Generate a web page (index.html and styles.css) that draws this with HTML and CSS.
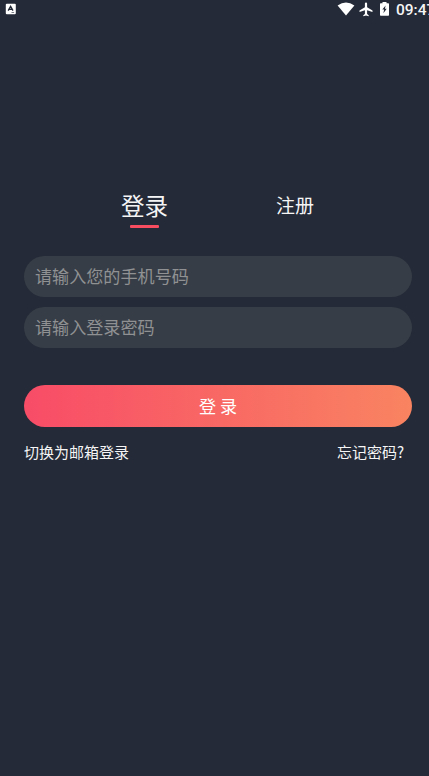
FILE: index.html
```html
<!DOCTYPE html>
<html lang="zh-CN">
<head>
<meta charset="utf-8">
<title>登录</title>
<link rel="stylesheet" href="styles.css">
</head>
<body>
<header class="status">
  <svg class="notice" width="11" height="12" viewBox="0 0 11 12"><rect x=".8" y=".7" width="10" height="10.6" rx="1" fill="#fff"/><path d="M3.2 7.6 5.6 3.4 8 7.6M4.2 6.4H7" fill="none" stroke="#242a37" stroke-width="1.4"/><path d="M6.5 9.5h2.6" stroke="#242a37" stroke-width=".6"/></svg>
  <div class="indicators">
    <svg width="18" height="14" viewBox="0 0 18 14"><path d="M.6 3.6Q9-2.6 17.4 3.6L9 13.4Z" fill="#fff"/></svg>
    <svg class="plane" width="14" height="15" viewBox="0 0 14 15"><path d="M13.5 10V8.6L8.1 5.2V1.5a1.1 1.1 0 0 0-2.2 0v3.7L.5 8.6V10l5.4-1.7v3.8l-1.6 1.1v1.1L7 13.5l2.7.8v-1.1l-1.6-1.1V8.3Z" fill="#fff"/></svg>
    <svg class="battery" width="9" height="14" viewBox="0 0 9 14"><path d="M2.5 0h4v1.2h1.8q.7 0 .7.7v11.2q0 .7-.7.7H.7q-.7 0-.7-.7V1.9q0-.7.7-.7h1.8Z" fill="#fff"/><path d="M5.6 3.5 2.3 7.6h1.8l-.7 3.6 3.3-4.4H4.9Z" fill="#242a37"/></svg>
    <span class="clock">09:47</span>
  </div>
</header>
<main>
  <nav class="tabs">
    <a class="tab active">登录</a>
    <a class="tab">注册</a>
  </nav>
  <form>
    <input class="field" type="tel" placeholder="请输入您的手机号码">
    <input class="field" type="password" placeholder="请输入登录密码">
    <button class="submit" type="button">登 录</button>
  </form>
  <div class="links"><a>切换为邮箱登录</a><a>忘记密码?</a></div>
</main>
</body>
</html>
```
FILE: styles.css
```css
* { box-sizing: border-box; }
body {
  margin: 0;
  height: 776px;
  overflow: hidden;
  background: #242a37;
  color: #f5f5f6;
  font-family: "Noto Sans CJK SC", sans-serif;
}
svg { display: block; flex: none; }
.status {
  height: 20px;
  display: flex;
  justify-content: space-between;
  padding: 2px 0 0 5px;
  overflow: hidden;
}
.notice { margin-top: 1px; }
.indicators { display: flex; width: 92px; flex: none; }
.plane { margin-left: 4px; }
.battery { margin-left: 7px; }
.clock {
  margin-left: 7px;
  font: 500 15.5px/16px Roboto, sans-serif;
}
main { padding: 165px 17px 0 24px; }
.tabs {
  display: flex;
  height: 43px;
  padding-left: 97px;
}
.tab { font-size: 19px; line-height: 39px; white-space: nowrap; }
.tab.active {
  width: 47px;
  margin-right: 108px;
  font-size: 23.5px;
  line-height: 41px;
}
.tab.active::after {
  content: "";
  display: block;
  width: 29px;
  height: 3px;
  margin: -1px auto 0;
  border-radius: 1px;
  background: #f84c61;
}
form { display: flex; flex-direction: column; padding-top: 28px; }
.field, .submit {
  width: 388px;
  height: 41px;
  border: 0;
  border-radius: 21px;
  font: 17.1px "Noto Sans CJK SC", sans-serif;
}
.field {
  margin-bottom: 9.5px;
  padding: 0 11px 2px;
  background: #373d46;
  color: #fff;
}
.field::placeholder { color: #8f9193; opacity: 1; }
.submit {
  height: 41.5px;
  margin-top: 28px;
  padding: 0;
  background: linear-gradient(90deg, #f84c67, #f98461);
  color: #fff;
}
.links {
  display: flex;
  justify-content: space-between;
  padding: 14.5px 8px 0 0;
  font-size: 15px;
  line-height: 22px;
}
```
